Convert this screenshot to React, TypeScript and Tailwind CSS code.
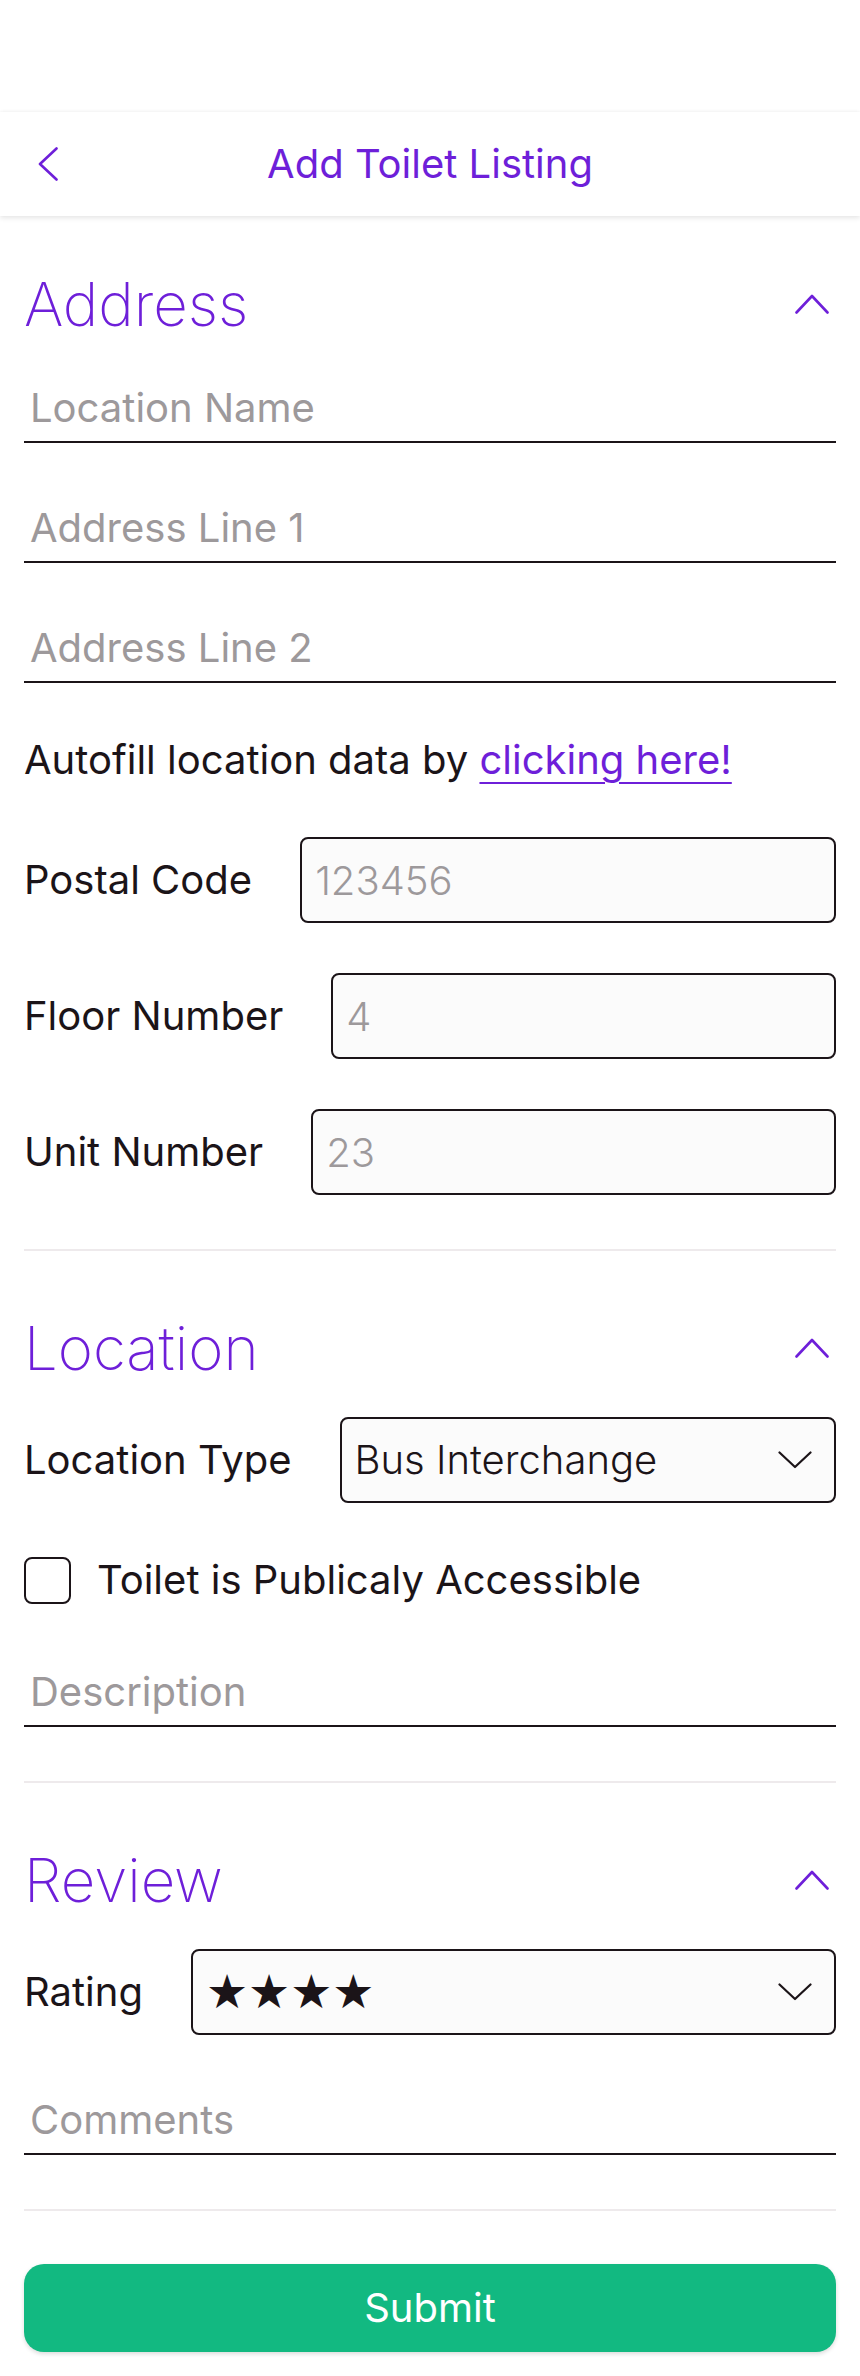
import { useState } from 'react';

const purple = 'text-[#6e1fd9]';

function ChevronUp() {
  return (
    <svg width="34" height="20" viewBox="0 0 34 20" fill="none" className="mr-[7px] shrink-0">
      <polyline points="1.5,18.5 17,2 32.5,18.5" stroke="#6e1fd9" strokeWidth="2.6" strokeLinecap="round" strokeLinejoin="round" />
    </svg>
  );
}

function ChevronDown() {
  return (
    <svg width="34" height="18" viewBox="0 0 34 18" fill="none" className="shrink-0">
      <polyline points="1.5,1.5 17,16 32.5,1.5" stroke="#1b1418" strokeWidth="2.2" strokeLinecap="round" strokeLinejoin="round" />
    </svg>
  );
}

interface SectionProps {
  title: string;
  children: React.ReactNode;
}

function Section({ title, children }: SectionProps) {
  return (
    <section className="flex flex-col">
      <div className="flex h-[76px] items-center justify-between">
        <h2 className={`text-[60px] leading-[76px] font-extralight ${purple}`}>{title}</h2>
        <ChevronUp />
      </div>
      <div className="mt-[31px] flex flex-col gap-[50px]">{children}</div>
    </section>
  );
}

function LineInput({ placeholder }: { placeholder: string }) {
  return (
    <input
      type="text"
      placeholder={placeholder}
      className="h-[70px] w-full border-b-2 border-[#1b1418] bg-transparent pl-[6px] text-[40px] leading-[48px] text-[#1b1418] outline-none placeholder:text-[#9d999b]"
    />
  );
}

function BoxRow({ label, placeholder }: { label: string; placeholder: string }) {
  return (
    <div className="flex items-center gap-[48px]">
      <span className="shrink-0 text-[40px] leading-[48px] text-[#1b1418]">{label}</span>
      <input
        type="text"
        placeholder={placeholder}
        className="h-[86px] min-w-0 flex-1 rounded-[8px] border-2 border-[#1b1418] bg-[#fbfbfb] px-[13px] text-[40px] font-light text-[#1b1418] outline-none placeholder:text-[#9d999b]"
      />
    </div>
  );
}

function SelectRow({ label, value, valueClass }: { label: string; value: string; valueClass?: string }) {
  return (
    <div className="flex items-center gap-[48px]">
      <span className="shrink-0 text-[40px] leading-[48px] text-[#1b1418]">{label}</span>
      <button
        type="button"
        className="flex h-[86px] min-w-0 flex-1 items-center justify-between rounded-[8px] border-2 border-[#1b1418] bg-[#fbfbfb] pr-[22px] pl-[13px] text-left text-[#1b1418]"
      >
        <span className={valueClass ?? 'text-[40px] leading-[48px] font-light'}>{value}</span>
        <ChevronDown />
      </button>
    </div>
  );
}

function Divider() {
  return <div className="h-[2px] w-full bg-[#eeeaec]" />;
}

export default function App() {
  const [isPublic, setIsPublic] = useState(false);

  return (
    <div className="min-h-[2376px] bg-white font-['Inter',sans-serif]">
      <div className="h-[112px]" />

      {/* Header */}
      <header className="grid h-[104px] grid-cols-[1fr_auto_1fr] items-center bg-white shadow-[0_2px_5px_rgba(0,0,0,0.10),0_-1px_3px_rgba(0,0,0,0.03)]">
        <button type="button" className="ml-[38px] flex w-[20px] items-center">
          <svg width="20" height="34" viewBox="0 0 20 34" fill="none">
            <polyline points="18.5,1.5 2,17 18.5,32.5" stroke="#6e1fd9" strokeWidth="2.6" strokeLinecap="round" strokeLinejoin="round" />
          </svg>
        </button>
        <h1 className={`text-[40px] leading-[48px] font-normal ${purple}`}>Add Toilet Listing</h1>
        <div />
      </header>

      <main className="px-[24px]">
        {/* Address */}
        <div className="pt-[50px] pb-[54px]">
          <Section title="Address">
            <LineInput placeholder="Location Name" />
            <LineInput placeholder="Address Line 1" />
            <LineInput placeholder="Address Line 2" />
            <p className="flex h-[54px] items-center text-[40px] leading-[48px] whitespace-pre text-[#1b1418]">
              {'Autofill location data by '}
              <a href="#" className={`${purple} underline decoration-2 underline-offset-[8px]`}>
                clicking here!
              </a>
            </p>
            <BoxRow label="Postal Code" placeholder="123456" />
            <BoxRow label="Floor Number" placeholder="4" />
            <BoxRow label="Unit Number" placeholder="23" />
          </Section>
        </div>
        <Divider />

        {/* Location */}
        <div className="pt-[59px] pb-[54px]">
          <Section title="Location">
            <SelectRow label="Location Type" value="Bus Interchange" />
            <label className="flex h-[54px] items-center gap-[26px]">
              <input
                type="checkbox"
                checked={isPublic}
                onChange={(e) => setIsPublic(e.target.checked)}
                className="h-[47px] w-[47px] shrink-0 appearance-none rounded-[8px] border-2 border-[#1b1418] bg-white"
              />
              <span className="text-[40px] leading-[48px] text-[#1b1418]">Toilet is Publicaly Accessible</span>
            </label>
            <LineInput placeholder="Description" />
          </Section>
        </div>
        <Divider />

        {/* Review */}
        <div className="pt-[59px] pb-[54px]">
          <Section title="Review">
            <SelectRow
              label="Rating"
              value="★★★★"
              valueClass="font-['DejaVu_Sans',sans-serif] text-[47px] leading-[56px]"
            />
            <LineInput placeholder="Comments" />
          </Section>
        </div>
        <Divider />

        <div className="pt-[53px] pb-[24px]">
          <button
            type="button"
            className="h-[88px] w-full rounded-[20px] bg-[#12b981] text-[40px] leading-[48px] text-white shadow-[0_2px_4px_rgba(0,0,0,0.14)]"
          >
            Submit
          </button>
        </div>
      </main>
    </div>
  );
}
